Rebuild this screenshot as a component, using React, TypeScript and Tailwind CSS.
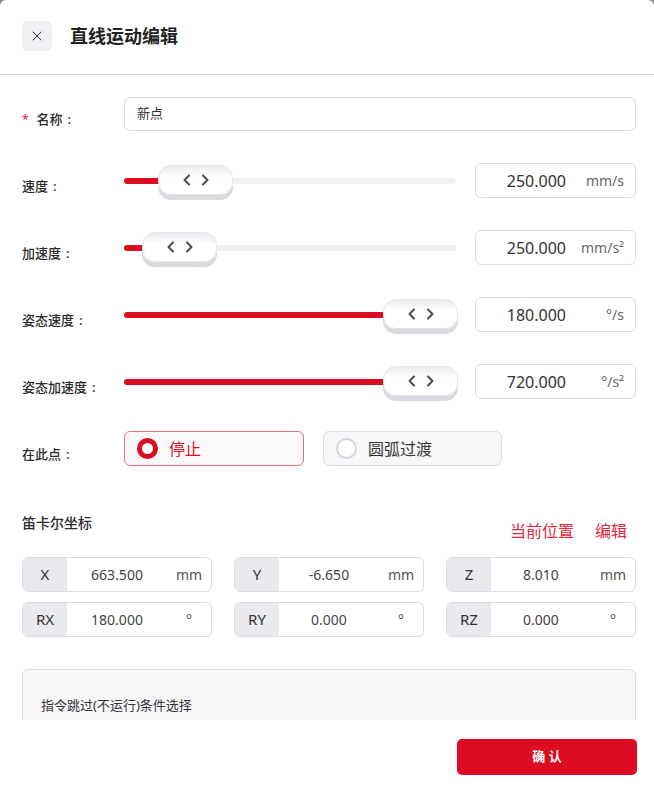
import { X } from 'lucide-react'

const FONT = { fontFamily: '"Noto Sans", "Noto Sans CJK SC", sans-serif' }

type SliderRow = { label: string; value: string; unit: string; thumb: number }

const sliders: SliderRow[] = [
  { label: '速度', value: '250.000', unit: 'mm/s', thumb: 34 },
  { label: '加速度', value: '250.000', unit: 'mm/s²', thumb: 18 },
  { label: '姿态速度', value: '180.000', unit: '°/s', thumb: 259 },
  { label: '姿态加速度', value: '720.000', unit: '°/s²', thumb: 259 },
]

const coords = [
  { axis: 'X', value: '663.500', unit: 'mm' },
  { axis: 'Y', value: '-6.650', unit: 'mm' },
  { axis: 'Z', value: '8.010', unit: 'mm' },
  { axis: 'RX', value: '180.000', unit: '°' },
  { axis: 'RY', value: '0.000', unit: '°' },
  { axis: 'RZ', value: '0.000', unit: '°' },
]

function Chevrons() {
  return (
    <svg width="26" height="12" viewBox="0 0 26 12" fill="none" stroke="#4b4b53" strokeWidth="2" strokeLinecap="round" strokeLinejoin="round">
      <polyline points="6,1.5 1.5,6 6,10.5" />
      <polyline points="20,1.5 24.5,6 20,10.5" />
    </svg>
  )
}

function RowLabel({ children, required }: { children: string; required?: boolean }) {
  return (
    <div className="flex w-[102px] shrink-0 items-center pt-3 text-[13px] font-medium text-[#2b2b2b]">
      {required && <span className="mr-[8px] text-[12px] text-[#e0283a]">*</span>}
      {children}
      <span className="ml-[5px]">:</span>
    </div>
  )
}

function Slider({ row }: { row: SliderRow }) {
  return (
    <div className="flex h-[35px] items-center">
      <RowLabel>{row.label}</RowLabel>
      <div className="relative mr-[19px] flex h-[35px] flex-1 items-center">
        <div className="h-[6px] w-full rounded-full bg-[#f0f0f2]">
          <div className="h-[6px] rounded-full bg-[#dc0d23]" style={{ width: row.thumb + 20 }} />
        </div>
        <div
          className="absolute top-[2px] flex h-[30px] w-[75px] items-center justify-center rounded-[13px] border border-[#e6e6ea] bg-[linear-gradient(#ebebef,#ffffff_40%,#ffffff)] shadow-[0_5px_0_#d9d9df]"
          style={{ left: row.thumb }}
        >
          <Chevrons />
        </div>
      </div>
      <div className="flex h-[35px] w-[161px] items-center gap-2 rounded-[6px] border border-[#dcdce2] pr-[11px]">
        <span className="flex-1 text-right text-[16px] text-[#333]">{row.value}</span>
        <span className="w-[50px] text-right text-[14px] text-[#666]">{row.unit}</span>
      </div>
    </div>
  )
}

export default function App() {
  return (
    <div className="h-[807px] w-[654px] bg-[#8a8a8a]" style={FONT}>
      <div className="flex h-full flex-col rounded-t-[6px] bg-white">
        <header className="flex h-[75px] shrink-0 items-center gap-[18px] border-b border-[#d9d9dd] pb-[2px] pl-[22px]">
          <button className="flex h-[30px] w-[30px] items-center justify-center rounded-[6px] bg-[#f0f0f4] text-[#333]">
            <X size={16} strokeWidth={1.5} />
          </button>
          <h1 className="text-[18px] font-bold text-[#222]">直线运动编辑</h1>
        </header>

        <main className="flex min-h-0 flex-1 flex-col overflow-hidden pl-[22px] pr-[18px] pt-[22px]">
          <div className="flex h-[34px] items-center">
            <RowLabel required>名称</RowLabel>
            <div className="flex h-[34px] flex-1 items-center rounded-[6px] border border-[#dcdce2] px-3 text-[13px] text-[#333]">
              新点
            </div>
          </div>

          <div className="mt-[32px] flex flex-col gap-[32px]">
            {sliders.map((row) => (
              <Slider key={row.label} row={row} />
            ))}

            <div className="flex h-[35px] items-center">
              <RowLabel>在此点</RowLabel>
              <div className="flex gap-[19px]">
                <div className="flex h-[35px] w-[180px] items-center gap-[11px] rounded-[6px] border border-[#e8707d] bg-[#f9f9fb] px-3">
                  <span className="h-[21px] w-[21px] rounded-full border-[5px] border-[#dc0d23] bg-white" />
                  <span className="text-[16px] text-[#dc0d23]">停止</span>
                </div>
                <div className="flex h-[35px] w-[179px] items-center gap-[11px] rounded-[6px] border border-[#dcdce2] bg-[#f7f7f9] px-3">
                  <span className="h-[21px] w-[21px] rounded-full border-2 border-[#d6d6dc] bg-white" />
                  <span className="text-[16px] text-[#333]">圆弧过渡</span>
                </div>
              </div>
            </div>
          </div>

          <section className="mt-[47px]">
            <div className="flex items-start justify-between">
              <h2 className="text-[14px] font-medium leading-[20px] text-[#2b2b2b]">笛卡尔坐标</h2>
              <div className="mr-[9px] mt-[7px] flex gap-[21px] text-[16px] leading-[22px] text-[#e0283a]">
                <span>当前位置</span>
                <span>编辑</span>
              </div>
            </div>
            <div className="mt-[15px] grid grid-cols-3 gap-x-[22px] gap-y-[10px]">
              {coords.map((c) => (
                <div key={c.axis} className="flex h-[35px] overflow-hidden rounded-[6px] border border-[#dcdce2]">
                  <span className="flex w-[44px] items-center justify-center bg-[#e9e9ee] text-[15px] text-[#333]">
                    {c.axis}
                  </span>
                  <span className="flex flex-1 items-center justify-center text-[14px] text-[#444]">{c.value}</span>
                  <span className="flex w-[44px] items-center justify-center text-[14px] text-[#555]">{c.unit}</span>
                </div>
              ))}
            </div>
          </section>

          <div className="mt-[32px] h-[120px] shrink-0 rounded-[6px] border border-[#dcdce2] bg-[#f7f7f9] px-[18px] pt-[26px] text-[13px] text-[#333]">
            指令跳过(不运行)条件选择
          </div>
        </main>

        <footer className="flex h-[87px] shrink-0 justify-end pr-[17px] pt-[19px]">
          <button className="h-[36px] w-[180px] rounded-[5px] bg-[#dc0d23] text-[13px] font-bold text-white">
            确 认
          </button>
        </footer>
      </div>
    </div>
  )
}
